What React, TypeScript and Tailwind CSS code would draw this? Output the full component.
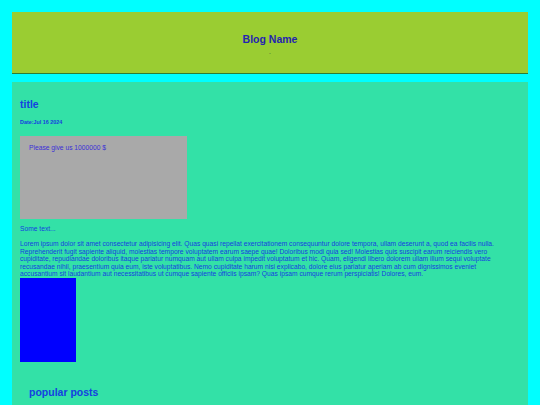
export default function App() {
  const lorem =
    "Lorem ipsum dolor sit amet consectetur adipisicing elit. Quas quasi repellat exercitationem consequuntur dolore tempora, ullam deserunt a, quod ea facilis nulla. Reprehenderit fugit sapiente aliquid, molestias tempore voluptatem earum saepe quae! Doloribus modi quia sed! Molestias quis suscipit earum reiciendis vero cupiditate, repudiandae doloribus itaque pariatur numquam aut ullam culpa impedit voluptatum et hic. Quam, eligendi libero dolorem ullam illum sequi voluptate recusandae nihil, praesentium quia eum, iste voluptatibus. Nemo cupiditate harum nisi explicabo, dolore eius pariatur aperiam ab cum dignissimos eveniet accusantium sit laudantium aut necessitatibus ut cumque sapiente officiis ipsam? Quas ipsam cumque rerum perspiciatis! Dolores, eum.";

  return (
    <div className="min-h-[405px] bg-[#00ffff] px-[12px] pt-[12px] font-['Liberation_Sans',Arial,sans-serif]">
      <header className="flex h-[62px] flex-col items-center border-b border-[#2e7d32] bg-[#9acd32] pt-[21px]">
        <h1 className="text-[10.5px] font-bold leading-[12px] text-[#2424b0]">Blog Name</h1>
        <p className="mt-[3px] text-[6.7px] leading-[8px] text-[#3a5a3a]">.</p>
      </header>

      <main className="mt-[8px] bg-[#33e1a7] px-[8px] pt-[16px] pb-[20px] text-[#1540e0]">
        <h2 className="text-[10.5px] font-bold leading-[12px]">title</h2>
        <p className="mt-[9px] text-[5.4px] font-bold leading-[7px]">Date:Jul 16 2024</p>

        <div className="mt-[10px] h-[83px] w-[167px] bg-[#a9a9a9] px-[9px] pt-[8px]">
          <p className="text-[6.7px] leading-[8px] text-[#3b2fd8]">Please give us 1000000 $</p>
        </div>

        <p className="mt-[6px] text-[6.7px] leading-[8px]">Some text...</p>
        <p className="mt-[7px] pr-[10px] text-[6.7px] leading-[7.5px]">{lorem}</p>

        <div className="h-[84px] w-[56px] bg-[#0000ff]" />

        <aside className="mt-[24px] pl-[9px]">
          <h3 className="text-[10.5px] font-bold leading-[12px]">popular posts</h3>
        </aside>
      </main>
    </div>
  );
}
